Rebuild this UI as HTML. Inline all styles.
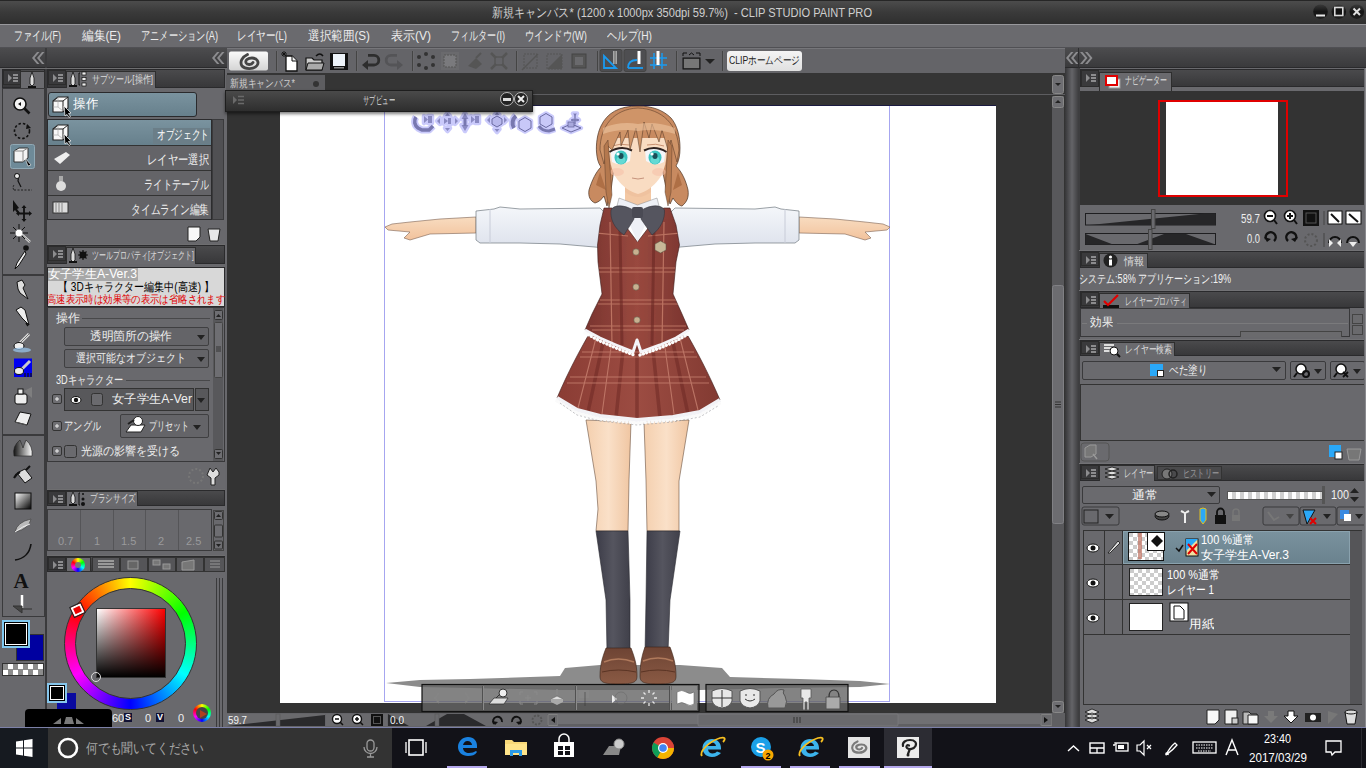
<!DOCTYPE html>
<html><head><meta charset="utf-8">
<style>
*{margin:0;padding:0;box-sizing:border-box}
html,body{width:1366px;height:768px;overflow:hidden;background:#68686c;font-family:"Liberation Sans",sans-serif;}
.a{position:absolute}
.t{position:absolute;white-space:nowrap;line-height:1;transform-origin:0 0}
.m{font-size:13px;color:#ececec;top:29px}
.hd{position:absolute;height:19px;background:linear-gradient(#4a4a4c,#38383a);border:1px solid #2a2a2c}
.mi{position:absolute;width:18px;height:15px;background:#3a3a3c;border:1px solid #2c2c2c}
.mi::before{content:'';position:absolute;left:4px;top:3px;border-left:4px solid #8c8c8e;border-top:4px solid transparent;border-bottom:4px solid transparent}
.mi::after{content:'';position:absolute;left:9px;top:3px;width:5px;height:8px;background:repeating-linear-gradient(#8c8c8e 0 2px,transparent 2px 3px)}
.tab{position:absolute;height:17px;background:#6a6a6e;border:1px solid #2e2e2e;border-bottom:none}
.tt{font-size:11px;color:#dcdcdc}
svg{position:absolute;overflow:visible}
</style></head><body>
<!-- ============ TITLE BAR ============ -->
<div class="a" style="left:0;top:0;width:1366px;height:24px;background:linear-gradient(#262626 0,#262626 1px,#4c4c4c 1px,#3a3a3a 50%,#2f2f2f)"></div>
<div class="t" style="left:492px;top:6px;font-size:13px;color:#cfcfcf;--w:380px">新規キャンバス* (1200 x 1000px 350dpi 59.7%)&nbsp; - CLIP STUDIO PAINT PRO</div>
<!-- window buttons -->
<svg style="left:1310px;top:2px" width="56" height="20" viewBox="1310 2 56 20">
 <defs><linearGradient id="wb" x1="0" x2="0" y1="0" y2="1"><stop offset="0" stop-color="#3a3a3a"/><stop offset=".5" stop-color="#151515"/><stop offset="1" stop-color="#1e1e1e"/></linearGradient></defs>
 <circle cx="1320.5" cy="11.7" r="7.3" fill="url(#wb)"/><rect x="1316" y="14.5" width="9" height="2" fill="#e8e8e8"/>
 <circle cx="1338.8" cy="11.7" r="7.3" fill="url(#wb)"/><rect x="1334.8" y="7.5" width="8" height="8" fill="#111" stroke="#d8d8d8" stroke-width="1.6"/>
 <circle cx="1356.8" cy="11.7" r="7.3" fill="url(#wb)"/><path d="M1353.5 8.5l6.5 6.5M1360 8.5l-6.5 6.5" stroke="#e0e0e0" stroke-width="2"/>
</svg>

<!-- ============ MENU BAR ============ -->
<div class="a" style="left:0;top:24px;width:1366px;height:24px;background:#6a6a6e;border-top:1px solid #98989c;border-bottom:1px solid #505054"></div>
<div class="t m" style="left:14px;--w:47px">ファイル(F)</div>
<div class="t m" style="left:82px;--w:39px">編集(E)</div>
<div class="t m" style="left:141px;--w:77px">アニメーション(A)</div>
<div class="t m" style="left:237px;--w:50px">レイヤー(L)</div>
<div class="t m" style="left:308px;--w:62px">選択範囲(S)</div>
<div class="t m" style="left:391px;--w:40px">表示(V)</div>
<div class="t m" style="left:451px;--w:54px">フィルター(I)</div>
<div class="t m" style="left:525px;--w:62px">ウインドウ(W)</div>
<div class="t m" style="left:607px;--w:45px">ヘルプ(H)</div>

<!-- ============ LEFT SIDE ============ -->
<div class="a" style="left:0;top:48px;width:227px;height:20px;background:linear-gradient(#4c4c4e,#3a3a3c);border-bottom:1px solid #2a2a2c"></div>
<div class="a" style="left:45px;top:48px;width:2px;height:680px;background:#3a3a3c"></div>
<div class="a" style="left:0;top:68px;width:227px;height:1px;background:#6e6e70"></div>

<!-- left tool column -->
<div class="hd" style="left:2px;top:69px;width:43px;height:19px"></div>
<div class="mi" style="left:3px;top:70px"></div>
<div class="tab" style="left:20px;top:71px;width:25px"></div>
<div class="a" style="left:2px;top:88px;width:43px;height:529px;border:1px solid #3a3a3c;background:#69696d"></div>
<div class="a" style="left:2px;top:274px;width:43px;height:2px;background:#3c3c3e"></div>
<div class="a" style="left:2px;top:434px;width:43px;height:2px;background:#3c3c3e"></div>
<svg style="left:0;top:68px" width="46" height="560" viewBox="0 68 46 560">
 <defs>
  <linearGradient id="gsq" x1="0" y1="0" x2="1" y2="1"><stop offset="0" stop-color="#fff"/><stop offset="1" stop-color="#000"/></linearGradient>
  <linearGradient id="gdrop" x1="0" x2="1"><stop offset="0" stop-color="#111"/><stop offset="1" stop-color="#fff"/></linearGradient>
 </defs>
 <!-- header pen icon -->
 <path d="M32 72l2 6v6l-2 2-2-2v-6z" fill="#ddd" stroke="#111" stroke-width=".8"/><rect x="28" y="86" width="8" height="2" fill="#111"/>
 <!-- magnifier -->
 <circle cx="20" cy="104" r="6" fill="#f4f4f4" stroke="#111" stroke-width="1.6"/><path d="M24.5 108.5l5 5" stroke="#111" stroke-width="2.6"/><path d="M18 104l3-2v4z" fill="#111"/>
 <!-- rotate -->
 <circle cx="22" cy="131" r="7.5" fill="none" stroke="#111" stroke-width="1.6" stroke-dasharray="2.5 2"/><path d="M27 124l4 4-5 1z" fill="#111"/>
 <!-- selected 3D -->
 <rect x="10.5" y="144.5" width="24" height="24" rx="2" fill="#6e8a98" stroke="#90a8b4"/>
 <path d="M14 151l5-3h9v10l-5 4h-9z" fill="#f4f4f4" stroke="#333" stroke-width="1"/><path d="M14 151h9v11M23 151l5-3" fill="none" stroke="#888"/><path d="M25 158l6 7-3 1z" fill="#000" stroke="#fff" stroke-width=".6"/>
 <!-- lasso/hand -->
 <path d="M15 174l4 1-1 6 3 6" fill="none" stroke="#111" stroke-width="1.2"/><circle cx="17" cy="176" r="2.5" fill="#eee" stroke="#111"/><path d="M14 190h18" stroke="#222" stroke-dasharray="2 1.5"/><path d="M14 185a4 4 0 0 0 0 5" stroke="#222" fill="none" stroke-dasharray="2 1"/>
 <!-- move -->
 <path d="M13 200l6 8-2 1 3 4-2 1-3-4-2 2z" fill="#111"/><path d="M24 208v11M19 213.5h11" stroke="#111" stroke-width="1.8"/><path d="M24 205l-2.5 3h5zM24 222l-2.5-3h5zM16 213.5l3-2.5v5zM32 213.5l-3-2.5v5z" fill="#111"/>
 <!-- magic wand -->
 <path d="M20 233l10 9" stroke="#ddd" stroke-width="2.4"/><path d="M20 233l10 9" stroke="#333" stroke-width=".6"/>
 <path d="M19 224v18M10 233h18M13 227l12 12M25 227l-12 12" stroke="#111" stroke-width="1"/><circle cx="19" cy="233" r="3.5" fill="#fff"/>
 <!-- eyedropper -->
 <circle cx="26" cy="248" r="2.8" fill="#111"/><path d="M25 251l-8 12-2 6 4-4 7-11z" fill="#eee" stroke="#111" stroke-width="1"/>
 <!-- separator -->
 <path d="M2 275h43" stroke="#3a3a3c" stroke-width="2"/>
 <!-- pen -->
 <path d="M17 282l5-2 3 5-2 3 5 11-8-6-2-4z" fill="#ddd" stroke="#111" stroke-width="1"/>
 <!-- pencil -->
 <path d="M16 310l5-3 4 3 4 15-7-7z" fill="#eee" stroke="#111" stroke-width="1"/><path d="M26 323l2 3" stroke="#111" stroke-width="1.5"/>
 <!-- brush -->
 <path d="M29 334l-9 9" stroke="#ddd" stroke-width="3"/><path d="M29 334l-9 9" stroke="#555" stroke-width=".8"/><ellipse cx="19" cy="346" rx="5" ry="3.5" fill="#eee" stroke="#111"/><ellipse cx="22" cy="350" rx="9" ry="2.5" fill="#9ac8f0" opacity=".7"/>
 <!-- blue airbrush -->
 <rect x="14" y="358.5" width="18" height="18.5" fill="#0000f0"/><path d="M30 361l-9 9" stroke="#ccc" stroke-width="3"/><ellipse cx="19" cy="371" rx="4.5" ry="3.5" fill="#eee" stroke="#111"/><path d="M25 373v4M28 373v4M31 373v4" stroke="#111" stroke-width="1.2"/>
 <!-- spray -->
 <rect x="15" y="394" width="12" height="10" rx="2" fill="#eee" stroke="#111"/><rect x="18" y="389" width="5" height="5" fill="#eee" stroke="#111"/><path d="M24 391l8-4v11z" fill="#888" opacity=".7"/>
 <!-- eraser -->
 <path d="M15 422l5-10 11 2-4 11z" fill="#eee" stroke="#111"/><path d="M15 422l12 3" stroke="#555"/>
 <path d="M2 435h43" stroke="#3a3a3c" stroke-width="2"/>
 <!-- drops -->
 <path d="M14 456q-2-10 6-16 2 5 3 8 1-3 3-8 7 6 6 16z" fill="url(#gdrop)" stroke="#222" stroke-width=".6"/>
 <!-- bucket -->
 <path d="M17 473l8-4 7 9-7 5z" fill="#ddd" stroke="#111"/><path d="M14 478q2-4 6-6" stroke="#111" stroke-width="2" fill="none"/><path d="M26 470l4-4" stroke="#111" stroke-width="2"/>
 <!-- gradient square -->
 <rect x="15" y="493" width="16" height="16" fill="url(#gsq)" stroke="#111"/>
 <!-- figure -->
 <path d="M15 532q2-10 16-13q-2 10-16 13z" fill="#bbb" stroke="#444" stroke-width=".7"/><path d="M15 532q8-6 15-8" stroke="#eee" fill="none"/>
 <!-- curve -->
 <path d="M15 560q14-2 16-16" fill="none" stroke="#111" stroke-width="1.6"/>
 <!-- A -->
 <text x="13.5" y="588" font-family="Liberation Serif" font-size="21" font-weight="bold" fill="#111">A</text>
 <!-- ruler -->
 <path d="M22 595v13" stroke="#fff" stroke-width="2.5"/><path d="M13 606l9 7v-7zM22 609h10" fill="#444" stroke="#333"/>
</svg>


<!-- subtool panel -->
<div class="hd" style="left:47px;top:69px;width:178px"></div>
<div class="mi" style="left:48px;top:70px"></div>
<div class="tab" style="left:66px;top:71px;width:90px"></div>
<svg style="left:68px;top:70px" width="24" height="18"><path d="M5 2l2 6v6l-2 2-2-2V8z" fill="#ddd" stroke="#111" stroke-width=".8"/><rect x="1" y="15" width="8" height="2" fill="#111"/><path d="M12 3h-1v12h1" fill="none" stroke="#111"/><rect x="14" y="2" width="4" height="3" fill="#eee" stroke="#111" stroke-width=".7"/><rect x="14" y="7.5" width="4" height="3" fill="#eee" stroke="#111" stroke-width=".7"/><rect x="14" y="13" width="4" height="3" fill="#eee" stroke="#111" stroke-width=".7"/></svg>
<div class="t tt" style="left:92px;top:74px;--w:61px">サブツール[操作]</div>
<div class="a" style="left:48px;top:92px;width:149px;height:25px;border-radius:3px;border:1px solid #2a2a2c;background:linear-gradient(#7a939f,#67808c)"></div>
<div class="t" style="left:73px;top:97px;font-size:13px;color:#fff;--w:25px">操作</div>
<div class="a" style="left:47px;top:119px;width:165px;height:101px;background:#646468;border:1px solid #2c2c2e"></div>
<div class="a" style="left:48px;top:120px;width:163px;height:25px;background:linear-gradient(#7a939f,#67808c)"></div>
<div class="a" style="left:48px;top:145px;width:163px;height:1px;background:#333"></div>
<div class="a" style="left:48px;top:170px;width:163px;height:1px;background:#333"></div>
<div class="a" style="left:48px;top:195px;width:163px;height:1px;background:#333"></div>
<div class="a" style="left:153px;top:128px;width:57px;height:16px;background:#6b7e88"></div>
<div class="t" style="left:157px;top:128px;font-size:13px;color:#fff;--w:52px">オブジェクト</div>
<div class="t" style="left:147px;top:153px;font-size:13px;color:#eee;--w:62px">レイヤー選択</div>
<div class="t" style="left:144px;top:178px;font-size:13px;color:#eee;--w:65px">ライトテーブル</div>
<div class="t" style="left:131px;top:203px;font-size:13px;color:#eee;--w:78px">タイムライン編集</div>
<div class="a" style="left:212px;top:119px;width:12px;height:101px;background:#505053;border:1px solid #3a3a3c"></div>
<svg style="left:50px;top:94px" width="30" height="22"><path d="M3 7l5-4h10v11l-5 4H3z" fill="#f8f8f8" stroke="#222" stroke-width="1.1"/><path d="M3 7h10v11M13 7l5-4" fill="none" stroke="#222" stroke-width="1"/><path d="M8 3v10H3M8 13l5 4" fill="none" stroke="#aaa" stroke-width=".7"/><path d="M14 12l7 7-2.5.5 2 3-1.5 1-2-3-2 1.5z" fill="#000" stroke="#fff" stroke-width=".7"/></svg>
<svg style="left:50px;top:122px" width="30" height="22"><path d="M3 7l5-4h10v11l-5 4H3z" fill="#f8f8f8" stroke="#222" stroke-width="1.1"/><path d="M3 7h10v11M13 7l5-4" fill="none" stroke="#222" stroke-width="1"/><path d="M8 3v10H3M8 13l5 4" fill="none" stroke="#aaa" stroke-width=".7"/><path d="M14 12l7 7-2.5.5 2 3-1.5 1-2-3-2 1.5z" fill="#000" stroke="#fff" stroke-width=".7"/></svg>
<svg style="left:52px;top:149px" width="22" height="18"><path d="M2 10l6 5 10-9-4-3z" fill="#eee"/></svg>
<svg style="left:54px;top:174px" width="14" height="18"><ellipse cx="7" cy="12" rx="5" ry="5" fill="#ddd"/><rect x="5" y="2" width="4" height="5" fill="#aaa"/></svg>
<svg style="left:52px;top:201px" width="18" height="14"><rect x="1" y="1" width="15" height="11" fill="#ddd" stroke="#333"/><path d="M4 1v11M7 1v11M10 1v11" stroke="#888"/></svg>
<svg style="left:186px;top:225px" width="38" height="18"><path d="M2 2h12v10l-4 4H2z" fill="#f8f8f8" stroke="#222"/><path d="M22 4h12l-2 12h-8z" fill="#e8e8e8" stroke="#222"/></svg>

<!-- tool property -->
<div class="a" style="left:47px;top:244px;width:178px;height:1px;background:#6e6e70"></div>
<div class="hd" style="left:47px;top:245px;width:178px"></div>
<div class="mi" style="left:48px;top:246px"></div>
<div class="tab" style="left:66px;top:247px;width:130px"></div>
<svg style="left:68px;top:246px" width="24" height="18"><path d="M5 2l2 6v6l-2 2-2-2V8z" fill="#ddd" stroke="#111" stroke-width=".8"/><rect x="1" y="15" width="8" height="2" fill="#111"/><circle cx="15" cy="9" r="3.5" fill="#111"/><path d="M15 4v10M10 9h10M11.5 5.5l7 7M18.5 5.5l-7 7" stroke="#111" stroke-width="1.2"/></svg>
<div class="t tt" style="left:92px;top:250px;--w:102px">ツールプロパティ[オブジェクト]</div>
<div class="a" style="left:47px;top:267px;width:178px;height:40px;background:#d8d8d8;border:1px solid #2a2a2c"></div>
<div class="a" style="left:48px;top:268px;width:90px;height:13px;background:#a8a8a8"></div>
<div class="t" style="left:48px;top:268px;font-size:12px;color:#fff;--w:89px">女子学生A-Ver.3</div>
<div class="t" style="left:58px;top:281px;font-size:12px;color:#000;--w:156px">【 3Dキャラクター編集中(高速) 】</div>
<div class="t" style="left:47px;top:294px;font-size:11px;color:#e00000;--w:178px">高速表示時は効果等の表示は省略されます</div>
<div class="a" style="left:47px;top:307px;width:178px;height:155px;background:#69696d;border:1px solid #38383a"></div>
<div class="t" style="left:56px;top:312px;font-size:12px;color:#eee;--w:24px">操作</div>
<div class="a" style="left:82px;top:318px;width:128px;height:1px;background:#48484a"></div>
<div class="a" style="left:64px;top:327px;width:145px;height:19px;background:#646468;border:1px solid #3f3f41;border-radius:2px"></div>
<div class="t" style="left:90px;top:330px;font-size:12px;color:#eee;--w:82px">透明箇所の操作</div>
<div class="a" style="left:64px;top:349px;width:145px;height:19px;background:#646468;border:1px solid #3f3f41;border-radius:2px"></div>
<div class="t" style="left:76px;top:352px;font-size:12px;color:#eee;--w:110px">選択可能なオブジェクト</div>
<div class="t" style="left:56px;top:374px;font-size:12px;color:#eee;--w:67px">3Dキャラクター</div>
<div class="a" style="left:126px;top:380px;width:84px;height:1px;background:#48484a"></div>
<div class="a" style="left:64px;top:388px;width:130px;height:23px;background:#58585b;border:1px solid #333"></div>
<div class="a" style="left:195px;top:388px;width:14px;height:23px;background:#58585b;border:1px solid #333"></div>
<div class="t" style="left:112px;top:393px;font-size:12px;color:#eee;--w:80px">女子学生A-Ver</div>
<div class="t" style="left:64px;top:420px;font-size:12px;color:#eee;--w:37px">アングル</div>
<div class="a" style="left:120px;top:414px;width:89px;height:24px;background:#646468;border:1px solid #3f3f41;border-radius:2px"></div>
<div class="t" style="left:149px;top:420px;font-size:12px;color:#eee;--w:40px">プリセット</div>
<div class="t" style="left:81px;top:445px;font-size:12px;color:#eee;--w:99px">光源の影響を受ける</div>
<div class="a" style="left:213px;top:308px;width:10px;height:153px;background:#535356"></div>
<div class="a" style="left:47px;top:462px;width:178px;height:26px;background:#69696d"></div>
<svg style="left:47px;top:307px" width="178" height="155" viewBox="47 307 178 155">
 <g fill="#6e6e72" stroke="#333"><rect x="52.5" y="394.5" width="9" height="9" rx="1.5"/><rect x="52.5" y="421.5" width="9" height="9" rx="1.5"/><rect x="52.5" y="446.5" width="9" height="9" rx="1.5"/></g>
 <path d="M55 399h4M57 397v4M55 426h4M57 424v4M55 451h4M57 449v4" stroke="#eee"/>
 <path d="M197 335h8l-4 5zM197 357h8l-4 5zM197 398h8l-4 5zM193 425h8l-4 5z" fill="#222"/>
 <ellipse cx="76" cy="400" rx="5" ry="3.5" fill="#fff" stroke="#111"/><circle cx="76" cy="400" r="2.2" fill="#111"/>
 <rect x="91.5" y="393.5" width="11" height="12" rx="2" fill="#6a6a6e" stroke="#333"/>
 <rect x="64.5" y="445.5" width="12" height="12" rx="2" fill="#6a6a6e" stroke="#333"/>
 <path d="M126 432l5-7h14l-4 7z" fill="#fff" stroke="#222"/><circle cx="138" cy="421" r="4.5" fill="#fff" stroke="#222"/><path d="M128 424l6-4" stroke="#222" stroke-width="2"/>
 <g transform="translate(0,0)"><rect x="213" y="308" width="10" height="153" fill="#58585b"/>
 <rect x="214.5" y="310.5" width="8" height="9" rx="1" fill="#6e6e72" stroke="#333"/><path d="M216 317l2.5-3 2.5 3z" fill="#222"/>
 <rect x="214.5" y="322.5" width="8" height="55" rx="1" fill="#6e6e72" stroke="#444"/><path d="M216 347h5M216 349h5M216 351h5" stroke="#333"/>
 <rect x="214.5" y="449.5" width="8" height="9" rx="1" fill="#6e6e72" stroke="#333"/><path d="M216 452l2.5 3 2.5-3z" fill="#222"/></g>
</svg>
<svg style="left:186px;top:465px" width="38" height="22"><circle cx="10" cy="11" r="7" fill="none" stroke="#777" stroke-width="2" stroke-dasharray="2 2"/><path d="M24 3l3 4 3-4 3 4v3l-4 3v7h-4v-7l-4-3z" fill="#ddd" stroke="#222"/></svg>

<!-- brush size -->
<div class="a" style="left:47px;top:489px;width:178px;height:1px;background:#6e6e70"></div>
<div class="hd" style="left:47px;top:490px;width:178px;height:16px"></div>
<div class="mi" style="left:48px;top:491px;height:13px"></div>
<div class="tab" style="left:66px;top:491px;width:72px;height:15px"></div>
<svg style="left:68px;top:491px" width="24" height="16"><path d="M5 1l2 5v5l-2 2-2-2V6z" fill="#ddd" stroke="#111" stroke-width=".8"/><rect x="1" y="13" width="8" height="2" fill="#111"/><path d="M12 2h-1v12h1" fill="none" stroke="#111"/><circle cx="15" cy="3" r="1" fill="#111"/><circle cx="15" cy="8" r="1.5" fill="#111"/><circle cx="15" cy="13" r="2" fill="#111"/></svg>
<div class="t tt" style="left:90px;top:493px;--w:46px">ブラシサイズ</div>
<div class="a" style="left:47px;top:509px;width:165px;height:42px;background:#69696d;border:1px solid #3a3a3c"></div>
<div class="t" style="left:58px;top:536px;font-size:11px;color:#9a9a9c">0.7</div>
<div class="t" style="left:94px;top:536px;font-size:11px;color:#9a9a9c">1</div>
<div class="t" style="left:121px;top:536px;font-size:11px;color:#9a9a9c">1.5</div>
<div class="t" style="left:158px;top:536px;font-size:11px;color:#9a9a9c">2</div>
<div class="t" style="left:186px;top:536px;font-size:11px;color:#9a9a9c">2.5</div>

<!-- color -->
<div class="a" style="left:47px;top:555px;width:178px;height:1px;background:#6e6e70"></div>
<div class="hd" style="left:47px;top:556px;width:178px;height:16px"></div>
<div class="mi" style="left:48px;top:557px;height:13px"></div>
<div class="tab" style="left:66px;top:557px;width:25px;height:15px"></div>
<div class="a" style="left:47px;top:572px;width:178px;height:156px;background:#69696d"></div>
<div class="a" style="left:64px;top:577px;width:133px;height:133px;border-radius:50%;background:conic-gradient(#ff0 0deg,#0f0 60deg,#0ff 120deg,#00f 180deg,#f0f 240deg,#f00 300deg,#ff0 360deg);border:1px solid #333"></div>
<div class="a" style="left:75px;top:588px;width:111px;height:111px;border-radius:50%;background:#69696d;border:1px solid #333"></div>
<div class="a" style="left:96px;top:608px;width:70px;height:70px;background:linear-gradient(transparent,#000),linear-gradient(90deg,#fff,#f00);border:1px solid #333"></div>
<div class="a" style="left:72px;top:605px;width:11px;height:10px;background:#e00;border:2px solid #fff;outline:1px solid #222;transform:rotate(-25deg)"></div>
<div class="a" style="left:91px;top:672px;width:10px;height:10px;border-radius:50%;border:1.5px solid #ddd"></div>

<!-- fg/bg swatches -->
<div class="a" style="left:16px;top:634px;width:28px;height:27px;background:#0000a0;border:1px solid #333"></div>
<div class="a" style="left:2px;top:620px;width:28px;height:28px;background:#000;border:2px solid #80c8f0;box-shadow:inset 0 0 0 1px #000,inset 0 0 0 2px #fff"></div>
<div class="a" style="left:2px;top:663px;width:42px;height:13px;border:1px solid #333;background:repeating-conic-gradient(#fff 0 25%,#8c8c8c 0 50%) 0 0/10px 11px"></div>
<div class="a" style="left:57px;top:693px;width:19px;height:16px;background:#0a0aa0"></div>
<div class="a" style="left:47px;top:683px;width:20px;height:20px;background:#000;border:2px solid #86c6ec;box-shadow:inset 0 0 0 1px #000,inset 0 0 0 2px #fff"></div>
<div class="a" style="left:25px;top:709px;width:87px;height:19px;background:#000;border-radius:4px 4px 0 0"></div>
<svg style="left:50px;top:712px" width="40" height="14"><path d="M3 12l8-6v6zM14 12l2-7h6l2 7zM26 6l8 6h-8z" fill="#7a7a7a"/></svg>
<div class="t" style="left:112px;top:713px;font-size:11px;color:#f0f0f0">60</div>
<div class="a" style="left:124px;top:713px;width:8px;height:9px;background:#111133"></div><div class="t" style="left:125px;top:713px;font-size:9px;color:#fff;font-weight:bold">S</div>
<div class="t" style="left:145px;top:713px;font-size:11px;color:#f0f0f0">0</div>
<div class="a" style="left:156px;top:713px;width:8px;height:9px;background:#111133"></div><div class="t" style="left:157px;top:713px;font-size:9px;color:#fff;font-weight:bold">V</div>
<div class="t" style="left:178px;top:713px;font-size:11px;color:#f0f0f0">0</div>
<div class="a" style="left:193px;top:704px;width:18px;height:18px;border-radius:50%;background:conic-gradient(#ff0,#0f0,#0ff,#00f,#f0f,#f00,#ff0)"></div>
<div class="a" style="left:196px;top:707px;width:12px;height:12px;border-radius:50%;background:#444"></div>
<svg style="left:197px;top:708px" width="12" height="12"><path d="M3 2l7 4-7 4z" fill="#b04020"/></svg>
<div class="a" style="left:216px;top:578px;width:9px;height:150px;background:repeating-linear-gradient(90deg,#3a3a3c 0 1px,#69696d 1px 3px)"></div>
<!-- brush size dividers -->
<div class="a" style="left:80px;top:510px;width:1px;height:40px;background:#555558"></div>
<div class="a" style="left:113px;top:510px;width:1px;height:40px;background:#555558"></div>
<div class="a" style="left:145px;top:510px;width:1px;height:40px;background:#555558"></div>
<div class="a" style="left:178px;top:510px;width:1px;height:40px;background:#555558"></div>
<div class="a" style="left:213px;top:510px;width:11px;height:41px;background:#69696d;border:1px solid #444"></div>
<svg style="left:213px;top:510px" width="12" height="42"><rect x="1.5" y="1.5" width="8" height="8" rx="1" fill="#6e6e72" stroke="#333"/><path d="M3 7l2.5-3 2.5 3z" fill="#222"/><rect x="1.5" y="15" width="8" height="12" rx="1" fill="#6e6e72" stroke="#333"/><rect x="1.5" y="31" width="8" height="8" rx="1" fill="#6e6e72" stroke="#333"/><path d="M3 34l2.5 3 2.5-3z" fill="#222"/></svg>
<!-- color tabs -->
<div class="a" style="left:66px;top:557px;width:25px;height:15px;background:#6a6a6e;border:1px solid #2e2e2e"></div>
<div class="a" style="left:71px;top:558px;width:14px;height:14px;border-radius:50%;background:conic-gradient(#ff0,#0f0,#0ff,#00f,#f0f,#f00,#ff0)"></div>
<div class="a" style="left:75px;top:562px;width:6px;height:6px;border-radius:50%;background:#777"></div>
<svg style="left:92px;top:557px" width="133" height="15">
 <rect x="0.5" y="0.5" width="27" height="14" fill="#555558" stroke="#333"/><path d="M6 4h16M6 7h16M6 10h16" stroke="#999" stroke-width="2"/>
 <rect x="28.5" y="0.5" width="27" height="14" fill="#555558" stroke="#333"/><rect x="36" y="4" width="10" height="8" fill="#666" stroke="#999"/>
 <rect x="56.5" y="0.5" width="27" height="14" fill="#555558" stroke="#333"/><rect x="61" y="3" width="7" height="5" fill="#777" stroke="#999"/><rect x="71" y="7" width="7" height="5" fill="#777" stroke="#999"/>
 <rect x="84.5" y="0.5" width="27" height="14" fill="#555558" stroke="#333"/><path d="M90 5l12-2v10h-12z" fill="#777" stroke="#999"/>
 <rect x="112.5" y="0.5" width="20" height="14" fill="#555558" stroke="#333"/><path d="M118 4h10M118 7h10M118 10h10" stroke="#999"/>
</svg>

<!-- ============ TOOLBAR ============ -->
<div class="a" style="left:227px;top:48px;width:838px;height:25px;background:#646468;border-top:1px solid #76767a"></div>
<svg style="left:227px;top:48px" width="838" height="25" viewBox="227 48 838 25">
 <defs><linearGradient id="cbtn" x1="0" x2="0" y1="0" y2="1"><stop offset="0" stop-color="#fafafa"/><stop offset="1" stop-color="#d4d4d4"/></linearGradient></defs>
 <rect x="229" y="51.5" width="39" height="19" rx="2" fill="url(#cbtn)"/>
 <path d="M247.5 54.5C242 57 239.5 62 242 66C245 69.5 254 69.5 257 65.5C259.5 62 257 58 252 58C248 58 245 60 246 62.8C247 65.2 251.5 65 253 62.5" fill="none" stroke="#454545" stroke-width="2.8" stroke-linecap="round"/>
 <g stroke="#444" stroke-width="1"><path d="M276.5 51v20M356.5 51v20M412.5 51v20M516.5 51v20M597.5 51v20M676.5 51v20M722.5 51v20"/></g>
 <g stroke="#6a6a6d" stroke-width="1"><path d="M277.5 51v20M357.5 51v20M413.5 51v20M517.5 51v20M598.5 51v20M677.5 51v20M723.5 51v20"/></g>
 <!-- new -->
 <path d="M286 56h6l5 5v10h-11z" fill="#fff" stroke="#111" stroke-width="1.3"/><path d="M292 56v5h5" fill="#eee" stroke="#111" stroke-width="1"/><path d="M282 52l4 4M286 52l-4 4M284 51v6M281 54h6" stroke="#111" stroke-width=".9"/>
 <!-- open -->
 <path d="M306 58h6l2 2h8v10h-16z" fill="#ccc" stroke="#111" stroke-width="1.2"/><path d="M308 63h16l-2 7h-16z" fill="#aaa" stroke="#111"/><path d="M316 56q4-4 7 0" fill="none" stroke="#111" stroke-width="1.5"/>
 <!-- save -->
 <rect x="330" y="53" width="18" height="17" fill="#111"/><rect x="333" y="54" width="12" height="12" fill="#eef4fa"/><rect x="334" y="67" width="10" height="1.5" fill="#888"/>
 <!-- undo/redo -->
 <path d="M367 65h7a4.8 4.8 0 0 0 0-9.6h-6" fill="none" stroke="#2e2e2e" stroke-width="2.8"/><path d="M362 65l6-5v10z" fill="#2e2e2e"/>
 <path d="M398 65h-7a4.8 4.8 0 0 1 0-9.6h6" fill="none" stroke="#545457" stroke-width="2.8"/><path d="M403 65l-6-5v10z" fill="#545457"/>
 <!-- dots -->
 <g fill="#333"><circle cx="426" cy="54" r="2"/><circle cx="433" cy="57" r="2"/><circle cx="433" cy="65" r="2"/><circle cx="426" cy="68" r="2"/><circle cx="419" cy="65" r="2"/><circle cx="419" cy="57" r="2"/></g>
 <rect x="441" y="52" width="18" height="18" fill="#6a6a6d"/><rect x="444" y="55" width="12" height="12" fill="#7a7a7d" stroke="#555" stroke-dasharray="2 1"/>
 <path d="M468 66l8-8 6 6-6 5z" fill="#555"/><path d="M476 58l5-5" stroke="#555" stroke-width="2"/>
 <path d="M491 53l5 5M507 53l-5 5M491 69l5-5M507 69l-5-5" stroke="#555" stroke-width="2.5"/><rect x="495" y="57" width="8" height="8" fill="none" stroke="#555" stroke-width="1.5"/>
 <!-- dim icons -->
 <rect x="524" y="54" width="13" height="14" fill="none" stroke="#555" stroke-dasharray="2 1"/><path d="M522 70l16-16" stroke="#555" stroke-width="1.5"/>
 <rect x="547" y="54" width="15" height="15" fill="none" stroke="#555" stroke-dasharray="2 1"/><path d="M547 69l15-15v15z" fill="#555"/>
 <rect x="572" y="54" width="14" height="14" fill="#555" stroke="#444"/><rect x="575" y="57" width="8" height="8" fill="#6a6a6d"/>
 <!-- ruler buttons -->
 <rect x="600" y="49.5" width="22" height="22" rx="2" fill="#4e4e51" stroke="#444"/>
 <rect x="624" y="49.5" width="22" height="22" rx="2" fill="#4e4e51" stroke="#444"/>
 <path d="M604 56l12 12h-12z" fill="none" stroke="#1a9af0" stroke-width="1.8"/><path d="M615 51v13" stroke="#fff" stroke-width="3"/><path d="M615 51v13" stroke="#111" stroke-width="1"/>
 <path d="M628 68q0-8 9-8" fill="none" stroke="#1a9af0" stroke-width="1.8"/><path d="M628 68h15" stroke="#1a9af0" stroke-width="1.8"/><path d="M639 51v13" stroke="#fff" stroke-width="3"/>
 <path d="M650 58h17M650 65h17M654 53v16M662 53v16" stroke="#1a9af0" stroke-width="1.5"/><path d="M658 51v14" stroke="#fff" stroke-width="3"/>
 <!-- window icon -->
 <rect x="683" y="58" width="17" height="11" fill="#444" stroke="#111"/><rect x="684" y="59" width="15" height="9" fill="#777"/><path d="M683 56v-3h4M700 56v-3h-4M689 55l2.5-2 2.5 2" stroke="#111" fill="none"/>
 <path d="M705 59h10l-5 5z" fill="#222"/>
</svg>
<div class="a" style="left:727px;top:51px;width:75px;height:20px;background:linear-gradient(#f4f4f4,#e0e0e0);border-radius:3px"></div>
<div class="t" style="left:729px;top:55px;font-size:11px;color:#222;--w:71px">CLIPホームページ</div>


<!-- canvas tab row -->
<div class="a" style="left:227px;top:73px;width:838px;height:22px;background:#353535"></div>
<div class="a" style="left:226px;top:75px;width:99px;height:17px;background:#5d5d60"></div>
<div class="t" style="left:230px;top:78px;font-size:11px;color:#d0d0d0;--w:65px">新規キャンバス*</div>
<div class="a" style="left:313px;top:81px;width:6px;height:6px;border-radius:50%;background:#333"></div>
<div class="a" style="left:227px;top:94px;width:838px;height:1px;background:#5d5d60"></div>
<!-- canvas area -->
<div class="a" style="left:227px;top:95px;width:838px;height:618px;background:#333"></div>
<div class="a" style="left:280px;top:106px;width:716px;height:597px;background:#fff"></div>
<div class="a" style="left:280px;top:105px;width:716px;height:1px;background:#1a1a40"></div>
<div class="a" style="left:384px;top:106px;width:506px;height:596px;border:1px solid #a6a6f0;border-top:none"></div>
<!-- v scrollbar -->
<div class="a" style="left:1052px;top:96px;width:12px;height:617px;background:#58585b"></div>
<svg style="left:1052px;top:74px" width="12" height="640" viewBox="1052 74 12 640">
 <rect x="1052.5" y="75.5" width="11" height="18" rx="2" fill="#6e6e72" stroke="#888"/><path d="M1055 83h6l-3 3z" fill="#222"/>
 <rect x="1052.5" y="96.5" width="11" height="11" rx="2" fill="#6e6e72" stroke="#888"/><path d="M1055 103h6l-3-3z" fill="#222"/>
 <rect x="1052.5" y="285.5" width="11" height="238" rx="2" fill="#6c6c70" stroke="#808084"/><path d="M1055 402h6M1055 404.5h6M1055 407h6" stroke="#333"/>
 <rect x="1052.5" y="701.5" width="11" height="11" rx="2" fill="#6e6e72" stroke="#888"/><path d="M1055 705h6l-3 3z" fill="#222"/>
</svg>

<!-- CHARACTER -->
<svg style="left:0;top:0" width="1366" height="768" viewBox="0 0 1366 768">
 <defs>
  <linearGradient id="sleeve" x1="0" x2="0" y1="0" y2="1"><stop offset="0" stop-color="#f4f6fa"/><stop offset="1" stop-color="#dde2ec"/></linearGradient>
  <linearGradient id="skin" x1="0" x2="0" y1="0" y2="1"><stop offset="0" stop-color="#f8dcc0"/><stop offset="1" stop-color="#f2c29c"/></linearGradient>
  <linearGradient id="leg" x1="0" x2="1"><stop offset="0" stop-color="#f4cfae"/><stop offset=".5" stop-color="#fae0c8"/><stop offset="1" stop-color="#f0c6a2"/></linearGradient>
  <linearGradient id="sock" x1="0" x2="1"><stop offset="0" stop-color="#3c3c48"/><stop offset=".5" stop-color="#55555f"/><stop offset="1" stop-color="#40404a"/></linearGradient>
  <linearGradient id="hair" x1="0" x2="0" y1="0" y2="1"><stop offset="0" stop-color="#d79a6c"/><stop offset=".5" stop-color="#c98a5c"/><stop offset="1" stop-color="#a8704c"/></linearGradient>
  <linearGradient id="vest" x1="0" x2="1"><stop offset="0" stop-color="#7a3530"/><stop offset=".5" stop-color="#9a4a40"/><stop offset="1" stop-color="#7a3530"/></linearGradient>
  <linearGradient id="skirt" x1="0" x2="1"><stop offset="0" stop-color="#8a3c34"/><stop offset=".5" stop-color="#9c4c42"/><stop offset="1" stop-color="#823a32"/></linearGradient>
  <linearGradient id="shoe" x1="0" x2="0" y1="0" y2="1"><stop offset="0" stop-color="#6e4434"/><stop offset="1" stop-color="#8a5a44"/></linearGradient>
 </defs>
 <!-- shadow -->
 <path d="M386 683 L420 680 L470 679 L560 676 L565 668 L600 665 L680 665 L722 668 L730 677 L800 679 L860 681 L890 684 L860 687 L780 688 L700 690 L560 690 L470 688 L420 687 Z" fill="#8c8c8c"/>
 <!-- left arm -->
 <path d="M476 217 L440 219 L410 222 L392 224 L385 227 L388 230 L410 232 L404 238 L410 240 L430 234 L476 233 Z" fill="url(#skin)" stroke="#7a6050" stroke-width=".6"/>
 <path d="M476 211 L494 209 L500 207 L520 209 L600 208 L606 214 L606 248 L560 244 L520 243 L494 243 L480 243 L476 240 Z" fill="url(#sleeve)" stroke="#707880" stroke-width=".7"/>
 <path d="M490 209 L490 243" stroke="#c8ccd8" stroke-width="1"/>
 <!-- right arm -->
 <path d="M799 217 L835 219 L865 222 L883 224 L890 227 L887 230 L865 232 L871 238 L865 240 L845 234 L799 233 Z" fill="url(#skin)" stroke="#7a6050" stroke-width=".6"/>
 <path d="M799 211 L781 209 L775 207 L755 209 L675 208 L669 214 L669 248 L715 244 L755 243 L781 243 L795 243 L799 240 Z" fill="url(#sleeve)" stroke="#707880" stroke-width=".7"/>
 <path d="M785 209 L785 243" stroke="#c8ccd8" stroke-width="1"/>
 <!-- back hair -->
 <path d="M638 106 C619 106 607 113 601 126 C597 134 596 145 596.5 152 C597 158 598 163 601 167 C596 172 592 180 589 190 C588 196 590 201 595 203 C599 202 602 199 604 196 L607 206 L611 190 L614 168 L612 150 L664 150 L662 168 L666 188 L670 204 L673 198 C676 203 680 206 682 206 C687 202 689 197 688 190 C686 181 682 172 676 166 C679 161 680 155 680 148 C680 136 677 125 671 118 C663 110 652 106 638 106 Z" fill="#c88a60" stroke="#4a3020" stroke-width=".7"/>
 <path d="M596 185 L600 172 L606 190 Z M682 185 L678 172 L673 190 Z" fill="#a8683f" opacity=".8"/>
 <!-- neck -->
 <path d="M625 178 L651 178 L651 206 L625 206 Z" fill="#f3c8a4"/>
 <path d="M625 186 Q638 198 651 186 L651 192 Q638 202 625 192 Z" fill="#e8b898" opacity=".35"/>
 <!-- face -->
 <path d="M609 138 C608 160 612 172 617 179 C622 186 630 192 638 194 C646 192 654 186 659 179 C664 172 668 160 667 138 Z" fill="#f9dcc2"/>
 <ellipse cx="617" cy="172" rx="7" ry="4" fill="#f6c0a8" opacity=".55"/>
 <ellipse cx="659" cy="172" rx="7" ry="4" fill="#f6c0a8" opacity=".55"/>
 <!-- eyes -->
 <path d="M610.5 151 Q621 146 631 150 L630 161 Q621 167 612 162 Z" fill="#f4f6fa"/>
 <ellipse cx="621" cy="157.5" rx="6.5" ry="7" fill="#3cc4c0"/>
 <ellipse cx="621" cy="160" rx="4.5" ry="4" fill="#6ee0d8" opacity=".8"/>
 <ellipse cx="621" cy="156" rx="2.6" ry="3" fill="#1a4e58"/>
 <circle cx="618" cy="154" r="1.6" fill="#fff"/>
 <path d="M609.5 152 Q621 145 632 150.5" stroke="#2e2220" stroke-width="2" fill="none"/>
 <path d="M645 150 Q655 146 665.5 151 L664 162 Q655 167 646 161 Z" fill="#f4f6fa"/>
 <ellipse cx="655" cy="157.5" rx="6.5" ry="7" fill="#3cc4c0"/>
 <ellipse cx="655" cy="160" rx="4.5" ry="4" fill="#6ee0d8" opacity=".8"/>
 <ellipse cx="655" cy="156" rx="2.6" ry="3" fill="#1a4e58"/>
 <circle cx="652" cy="154" r="1.6" fill="#fff"/>
 <path d="M644 150.5 Q655 145 666.5 152" stroke="#2e2220" stroke-width="2" fill="none"/>
 <path d="M612 146 Q620 143 629 145 M647 145 Q656 143 664 146" stroke="#c89070" stroke-width="1" fill="none"/>
 <path d="M632 178 Q638 180 644 178" stroke="#b8806a" stroke-width=".8" fill="none"/>
 <!-- bangs -->
 <path d="M600 150 C600 126 614 109 638 108 C662 109 678 124 679 150 L677 162 L671 140 L668 150 L662 130 L659 142 L652 124 L649 138 L644 122 L640 152 L636 128 L630 150 L628 130 L621 146 L620 132 L612 150 L608 146 L604 164 Z" fill="#cf9468" stroke="#4a3020" stroke-width=".5"/>
 <path d="M603 128 Q620 121 638 124 Q656 121 675 128 L675 134 Q656 128 638 131 Q620 128 603 134 Z" fill="#f0c8a4" opacity=".55"/>
 <path d="M604 146 L608 140 L612 195 L609 208 L606 192 Z M672 146 L668 140 L665 192 L668 206 L671 192 Z" fill="#b4784e" stroke="#4a3020" stroke-width=".4"/>
 <!-- collar -->
 <path d="M619 198 L637.5 205 L657 198 L660 210 L637.5 212 L616 210 Z" fill="#eef0f6" stroke="#888" stroke-width=".5"/>
 <!-- legs -->
 <path d="M586 420 L631 422 L629 480 L628 531 L596 531 L598 509 L596 481 Z" fill="url(#leg)" stroke="#6a5040" stroke-width=".6"/>
 <path d="M644 422 L689 420 L679 481 L679 531 L647 531 L646 480 Z" fill="url(#leg)" stroke="#6a5040" stroke-width=".6"/>
 <!-- socks -->
 <path d="M596 531 L628 531 L630 600 L630 652 L607 652 L606 600 Z" fill="url(#sock)" stroke="#2a2a30" stroke-width=".6"/>
 <path d="M647 531 L680 531 L670 600 L668 652 L645 652 L646 600 Z" fill="url(#sock)" stroke="#2a2a30" stroke-width=".6"/>
 <!-- shoes -->
 <path d="M606 648 L631 648 C634 656 637 664 637 676 C637 682 634 684 618 684 C603 684 600 682 600 676 C600 664 603 656 606 648 Z" fill="url(#shoe)" stroke="#3a2418" stroke-width=".6"/>
 <path d="M604 662 Q618 656 634 662" stroke="#b07a5c" stroke-width="1.4" fill="none"/>
 <path d="M602 672 Q618 668 636 672" stroke="#5a3424" stroke-width="1" fill="none"/>
 <path d="M645 647 L670 647 C673 655 676 664 676 676 C676 682 673 684 658 684 C643 684 640 682 640 676 C640 664 642 655 645 647 Z" fill="url(#shoe)" stroke="#3a2418" stroke-width=".6"/>
 <path d="M643 661 Q658 655 673 661" stroke="#b07a5c" stroke-width="1.4" fill="none"/>
 <path d="M641 672 Q658 668 675 672" stroke="#5a3424" stroke-width="1" fill="none"/>
 <!-- skirt -->
 <path d="M588 336 L688 336 C696 350 708 372 720 400 L700 412 L673 417 L637 420 L600 416 L577 410 L557 398 C568 372 580 350 588 336 Z" fill="url(#skirt)" stroke="#3a1a18" stroke-width=".6"/>
 <g stroke="#6a2622" stroke-width="3.5" opacity=".5" fill="none">
  <path d="M604 338 L588 412 M624 340 L616 418 M637 342 L637 420 M652 340 L660 418 M672 338 L688 414"/>
 </g>
 <g stroke="#d08a78" stroke-width="1.1" opacity=".7" fill="none">
  <path d="M582 352 L694 352 M580 357 L697 357"/>
  <path d="M570 377 L706 377 M567 383 L709 383"/>
  <path d="M596 338 L578 408 M612 340 L602 414 M664 340 L674 414 M680 338 L698 410"/>
 </g>
 <path d="M557 398 L577 410 L600 416 L637 420 L673 417 L700 412 L720 400" fill="none" stroke="#f2f2f6" stroke-width="4" stroke-linejoin="round"/>
 <path d="M557 401 L577 413 L600 419 L637 423 L673 420 L700 415 L720 403" fill="none" stroke="#fafafa" stroke-width="3.6" stroke-dasharray="0.1 3.6" stroke-linecap="round"/>
 <path d="M560 403 L577 415 L600 421 L637 425 L673 422 L700 417 L718 406" fill="none" stroke="#9a9aa0" stroke-width=".6" stroke-dasharray="2 2"/>
 <!-- vest -->
 <path d="M604 208 L612 208 L637.5 242 L663.5 208 L670 208 L676 225 L679.5 245 L676 262 L673 294 L682 314 L689 330 L676 338 L660 345 L641 352 L637 340 L633 352 L616 345 L600 338 L585 330 L592 314 L602 294 L598 262 L597.5 245 L600 225 Z" fill="url(#vest)" stroke="#3a1a18" stroke-width=".6"/>
 <!-- shirt V -->
 <path d="M624 212 L651 212 L637.5 242 Z" fill="#eef0f6"/>
 <!-- vest plaid -->
 <clipPath id="vclip"><path d="M604 208 L612 208 L637.5 242 L663.5 208 L670 208 L676 225 L679.5 245 L676 262 L673 294 L682 314 L689 330 L676 338 L660 345 L641 352 L637 340 L633 352 L616 345 L600 338 L585 330 L592 314 L602 294 L598 262 L597.5 245 L600 225 Z"/></clipPath>
 <g clip-path="url(#vclip)">
 <g stroke="#c8806c" stroke-width="1.2" opacity=".8">
  <path d="M596 233 L628 236 M648 236 L682 233"/>
  <path d="M598 268 L676 268 M598 272 L676 272"/>
  <path d="M600 300 L676 300 M598 304 L678 304"/>
  <path d="M590 326 L686 326 M592 330 L684 330"/>
  <path d="M610 222 L612 345 M664 222 L662 345"/>
 </g>
 <g stroke="#6a2824" stroke-width="3" opacity=".6">
  <path d="M620 230 L622 345 M654 230 L652 345"/>
 </g>
 </g>
 <!-- buttons -->
 <circle cx="636" cy="252" r="3.2" fill="#c8b090" stroke="#554" stroke-width=".5"/>
 <circle cx="636" cy="287" r="3.2" fill="#c8b090" stroke="#554" stroke-width=".5"/>
 <circle cx="637" cy="320" r="3.2" fill="#c8b090" stroke="#554" stroke-width=".5"/>
 <path d="M655 244 L660.5 241 L666 244 L666 250 L660.5 253 L655 250 Z" fill="#c8b898" stroke="#554" stroke-width=".5"/>
 <!-- vest hem lace -->
 <path d="M585 330 L600 338 L616 345 L633 352 L637 340 L641 352 L660 345 L676 338 L689 330" fill="none" stroke="#f4f4f8" stroke-width="3" stroke-linejoin="round"/>
 <path d="M585 333 L600 341 L616 348 L634 355 M640 355 L660 348 L676 341 L690 333" fill="none" stroke="#fcfcfc" stroke-width="3.4" stroke-dasharray="0.1 3.4" stroke-linecap="round"/>
 <!-- bow -->
 <path d="M633 210C625 205 614 204 611 210C610 219 614 228 624 235L634 219Z" fill="#55555f" stroke="#34343c" stroke-width=".6"/>
 <path d="M642 210C650 205 661 204 664.5 210C665 219 661 228 652 235L641 219Z" fill="#55555f" stroke="#34343c" stroke-width=".6"/>
 <rect x="632" y="207" width="11" height="11" rx="2" fill="#4a4a54"/>
 <!-- 3D manipulator icons -->
 <g fill="#c8c8fb" stroke="#c8c8fb" stroke-width="4.5" stroke-linejoin="round" opacity=".95">
  <path d="M416 117a8 8 0 0 0 2 11l4 2h7l4-4" fill="none" stroke-width="7"/>
  <path d="M424 116l4 3.5-4 3.5zM428 116h4v7h-4z"/>
  <path d="M437 121l3-3v6zM458 121l-3-3v6zM447.5 113l-2.5 3h5zM447.5 131l-2.5-3h5z"/>
  <path d="M444 118l4 3-4 3zM448 118h3v6h-3z"/>
  <path d="M465 113l-3.5 6h7zM465 131l-3.5-6h7z"/><path d="M465 118v8" stroke-width="6.5" fill="none"/>
  <path d="M471 116l4 3.5-4 3.5zM475 116h4v7h-4z"/>
  <path d="M487 120l3-3v6zM507 120l-3-3v6zM497 112l-2.5 3h5zM497 132l-2.5-3h5z"/>
  <path d="M492 119l5-3 5 3v5l-5 3-5-3z"  stroke-width="4.5"/>
  <path d="M516 116a9 9 0 0 0 -2 12" fill="none" stroke-width="7.5"/>
  <path d="M519 121l6-3.5 6 3.5v7l-6 3.5-6-3.5z"  stroke-width="4.5"/>
  <path d="M540 117l6-3.5 6 3.5v7l-6 3.5-6-3.5z"  stroke-width="4.5"/>
  <path d="M539 126q3 5 10 5l6-2" fill="none" stroke-width="6.5"/>
  <path d="M575 116l-2-2.5h4zM575 124l-2 2.5h4zM571 120l2.5-2v4zM579 120l-2.5-2v4z"/><path d="M575 114v10M571 120h8" fill="none" stroke-width="5"/>
  <path d="M562 128l9-4 10 4-10 4z"  stroke-width="4.5"/><rect x="568" y="122" width="6" height="5"  stroke-width="4.5"/>
 </g>
 <g fill="#8a8ac2" stroke="#7878b0" stroke-width="0">
  <path d="M416 117a8 8 0 0 0 2 11l4 2h7l4-4" fill="none" stroke-width="3.5"/>
  <path d="M424 116l4 3.5-4 3.5zM428 116h4v7h-4z"/>
  <path d="M437 121l3-3v6zM458 121l-3-3v6zM447.5 113l-2.5 3h5zM447.5 131l-2.5-3h5z"/>
  <path d="M444 118l4 3-4 3zM448 118h3v6h-3z"/>
  <path d="M465 113l-3.5 6h7zM465 131l-3.5-6h7z"/><path d="M465 118v8" stroke-width="3" fill="none"/>
  <path d="M471 116l4 3.5-4 3.5zM475 116h4v7h-4z"/>
  <path d="M487 120l3-3v6zM507 120l-3-3v6zM497 112l-2.5 3h5zM497 132l-2.5-3h5z"/>
  <path d="M492 119l5-3 5 3v5l-5 3-5-3z" fill="#b8b8ec" stroke-width="1" stroke="#6a6aa2"/>
  <path d="M516 116a9 9 0 0 0 -2 12" fill="none" stroke-width="4"/>
  <path d="M519 121l6-3.5 6 3.5v7l-6 3.5-6-3.5z" fill="#c8c8f8" stroke-width="1" stroke="#6a6aa2"/>
  <path d="M540 117l6-3.5 6 3.5v7l-6 3.5-6-3.5z" fill="#c8c8f8" stroke-width="1" stroke="#6a6aa2"/>
  <path d="M539 126q3 5 10 5l6-2" fill="none" stroke-width="3"/>
  <path d="M575 116l-2-2.5h4zM575 124l-2 2.5h4zM571 120l2.5-2v4zM579 120l-2.5-2v4z"/><path d="M575 114v10M571 120h8" fill="none" stroke-width="1.4"/>
  <path d="M562 128l9-4 10 4-10 4z" fill="#c8c8f8" stroke-width="1" stroke="#6a6aa2"/><rect x="568" y="122" width="6" height="5" fill="#a8a8dc" stroke-width=".8" stroke="#6a6aa2"/>
 </g>
</svg>


<!-- sub view window -->
<div class="a" style="left:225px;top:90px;width:308px;height:22px;background:linear-gradient(#4a4a4a,#2e2e2e);border:1px solid #1e1e1e;box-shadow:0 2px 3px rgba(0,0,0,.5)"></div>
<svg style="left:232px;top:94px" width="14" height="12"><path d="M1 2l4 4-4 4z" fill="#6a6a6a"/><path d="M6 2.5h6M6 6h6M6 9.5h6" stroke="#6a6a6a" stroke-width="1.6"/></svg>
<div class="t tt" style="left:363px;top:95px;--w:32px">サブビュー</div>
<svg style="left:500px;top:92px" width="30" height="16"><circle cx="7" cy="7" r="6.5" fill="#222" stroke="#bbb"/><rect x="3" y="6" width="8" height="3" fill="#ddd"/><circle cx="21" cy="7" r="6.5" fill="#222" stroke="#bbb"/><path d="M18 4l6 6M24 4l-6 6" stroke="#eee" stroke-width="2"/></svg>

<!-- 3d float toolbar -->
<svg style="left:420px;top:683px" width="430" height="31" viewBox="420 683 430 31">
 <rect x="422" y="684.5" width="277" height="27" fill="#646464" fill-opacity=".8" stroke="#111" stroke-width="1.2"/>
 <rect x="706" y="684.5" width="142" height="27" fill="#646464" fill-opacity=".8" stroke="#111" stroke-width="1.2"/>
 <path d="M482.5 686v24M575.5 686v24M669.5 686v24" stroke="#505050"/><path d="M483.5 686v24M576.5 686v24M670.5 686v24" stroke="#8a8a8a"/>
 <path d="M439 693l-4 5 4 5M465 693l4 5-4 5" fill="none" stroke="#858585" stroke-width="2"/>
 <path d="M489 704l5-6h14l-4 6z" fill="#ddd" stroke="#333" stroke-width=".8"/><circle cx="503" cy="693" r="4" fill="#eee" stroke="#333"/><path d="M496 698l4-4" stroke="#333"/>
 <path d="M523 692h-3v3M534 692h3v3M523 704h-3v-3M534 704h3v-3M528 695v6M525 698h6" stroke="#8a8a8a" fill="none"/>
 <path d="M551 699l6-3 6 3-6 3z" fill="#ddd" stroke="#666" stroke-width=".6"/><path d="M551 699v3l6 3 6-3v-3" fill="#aaa"/><path d="M557 689v6" stroke="#888" stroke-width="1.5"/>
 <path d="M579 690h10v8h-10z" fill="#888" opacity=".6"/><path d="M585 692v14" stroke="#333" stroke-width="1" opacity=".5"/>
 <path d="M612 695l5 4-5 4z" fill="#eee"/>
 <circle cx="621" cy="698" r="6" fill="none" stroke="#6a6a6a" opacity=".6"/>
 <g stroke="#e8e8e8" stroke-width="1.3"><path d="M649 690v3M649 703v3M641 698h3M654 698h3M643.5 692.5l2 2M652.5 701.5l2 2M643.5 703.5l2-2M652.5 694.5l2-2"/></g>
 <rect x="672" y="686" width="25" height="24" fill="#8a8a8a"/>
 <path d="M677 692q5-3 9 0t8 0v12q-4 3-8 0t-9 0z" fill="#fff" stroke="#666" stroke-width=".6"/>
 <!-- head/face/hair/body/bag -->
 <path d="M712 691q10-5 20 0v10q-2 6-10 7q-8-1-10-7z" fill="#e8e8e8" stroke="#555"/><path d="M722 690v17M712 698h20" stroke="#333"/>
 <path d="M740 691q10-5 20 0v10q-2 6-10 7q-8-1-10-7z" fill="#e8e8e8" stroke="#555"/><path d="M745 699q5 4 10 0M746 694v2M754 694v2" stroke="#333" fill="none"/>
 <path d="M768 708q-2-10 6-14 4-6 10-4-2 3 1 6 3 5 0 12z" fill="#999" stroke="#555"/>
 <path d="M801 689h10v9h-2v12h-2v-8h-2v8h-2v-12h-2z" fill="#e8e8e8" stroke="#555" stroke-width=".8"/>
 <path d="M826 697h14v12h-14z" fill="#aaa" stroke="#555"/><path d="M829 697q0-7 5-7t5 7" fill="none" stroke="#333" stroke-width="1.2"/>
</svg>
<!-- status bar -->
<div class="a" style="left:227px;top:713px;width:838px;height:14px;background:#646468"></div>
<svg style="left:227px;top:713px" width="838" height="14" viewBox="227 713 838 14">
 <rect x="227" y="714" width="98" height="12" fill="#6a6a6d"/><path d="M227 726L325 715V726Z" fill="#2a2a2c"/>
 <rect x="276" y="714" width="4" height="12" fill="#6a6a6d" stroke="#555" stroke-width=".5"/>
 <rect x="326" y="714" width="61" height="12" fill="#6a6a6d"/>
 <circle cx="337" cy="719" r="4.5" fill="#fff" stroke="#111" stroke-width="1.4"/><path d="M335 719h4M340 722l3 3" stroke="#111" stroke-width="1.5"/>
 <circle cx="357" cy="719" r="4.5" fill="#fff" stroke="#111" stroke-width="1.4"/><path d="M355 719h4M357 717v4M360 722l3 3" stroke="#111" stroke-width="1.5"/>
 <rect x="371" y="714" width="12" height="12" fill="#111"/><rect x="373.5" y="716.5" width="7" height="7" fill="none" stroke="#555"/>
 <rect x="388" y="714" width="98" height="12" fill="#6a6a6d"/><path d="M388 714L409 726H426L447 714H464L486 726H388Z" fill="#2a2a2c"/>
 <rect x="435" y="714" width="4" height="12" fill="#6a6a6d" stroke="#555" stroke-width=".5"/>
 <rect x="486" y="714" width="61" height="12" fill="#6a6a6d"/>
 <path d="M494 724a4.5 4.5 0 1 1 8 -2" fill="none" stroke="#111" stroke-width="2"/><path d="M492 721l3 4 3-3z" fill="#111"/>
 <path d="M520 724a4.5 4.5 0 1 0 -8 -2" fill="none" stroke="#111" stroke-width="2"/><path d="M522 721l-3 4-3-3z" fill="#111"/>
 <circle cx="537" cy="720" r="4.5" fill="none" stroke="#555" stroke-width="1.8" stroke-dasharray="2 1.5"/>
 <rect x="548" y="714.5" width="10" height="11" rx="1" fill="#6a6a6d" stroke="#888" stroke-width=".8"/><path d="M551 720l4-3v6z" fill="#111"/>
 <rect x="558" y="714" width="482" height="12" fill="#707073"/><rect x="558" y="724" width="482" height="2" fill="#606063"/>
 <rect x="698" y="714" width="200" height="12" rx="1" fill="#6a6a6d" stroke="#808083" stroke-width=".6"/>
 <path d="M794 717v6M797 717v6M800 717v6" stroke="#333" stroke-width="1"/>
 <rect x="1041" y="714.5" width="11" height="11" rx="1" fill="#6a6a6d" stroke="#888" stroke-width=".8"/><path d="M1048 720l-4-3v6z" fill="#111"/>
 <rect x="1052" y="713" width="13" height="14" fill="#5f5f62"/>
</svg>
<div class="t" style="left:228px;top:715px;font-size:11.5px;color:#f4f4f4;--w:19px">59.7</div>
<div class="t" style="left:390px;top:715px;font-size:11.5px;color:#f4f4f4;--w:14px">0.0</div>


<!-- ============ RIGHT SIDE ============ -->
<div class="a" style="left:1065px;top:48px;width:14px;height:680px;background:linear-gradient(90deg,#363638,#646468 50%,#3a3a3c)"></div>
<div class="a" style="left:1065px;top:48px;width:301px;height:20px;background:linear-gradient(#4c4c4e,#3a3a3c);border-bottom:1px solid #2a2a2c"></div>
<svg style="left:0;top:0" width="1366" height="70" viewBox="0 0 1366 70"><path d="M37 52l-5 6 5 6h2.5l-5-6 5-6zM42 52l-5 6 5 6h2.5l-5-6 5-6zM217 52l-5 6 5 6h2.5l-5-6 5-6zM222 52l-5 6 5 6h2.5l-5-6 5-6zM1071 52l-5 6 5 6h2.5l-5-6 5-6zM1076 52l-5 6 5 6h2.5l-5-6 5-6zM1080 52l5 6-5 6h2.5l5-6-5-6zM1085 52l5 6-5 6h2.5l5-6-5-6z" fill="#8c8c8f"/><path d="M1078.5 48v20" stroke="#2e2e30"/></svg>
<div class="a" style="left:1079px;top:68px;width:287px;height:660px;background:#69696d"></div>
<div class="a" style="left:1078px;top:68px;width:2px;height:660px;background:#3e3e40"></div>
<!-- navigator -->
<div class="a" style="left:1080px;top:69px;width:285px;height:22px;background:#6a6a6e"></div>
<div class="hd" style="left:1080px;top:69px;width:285px;height:18px"></div>
<div class="mi" style="left:1081px;top:70px;height:17px"></div>
<div class="tab" style="left:1099px;top:72px;width:73px;height:19px"></div>
<svg style="left:1103px;top:73px" width="20" height="18"><rect x="6" y="6" width="11" height="9" fill="#eee" stroke="#999"/><rect x="3" y="3" width="11" height="9" fill="#fff" stroke="#e00000" stroke-width="2"/></svg>
<div class="t tt" style="left:1125px;top:75px;--w:42px">ナビゲーター</div>
<div class="a" style="left:1080px;top:91px;width:285px;height:114px;background:#333"></div>
<div class="a" style="left:1158px;top:100px;width:130px;height:97px;border:2px solid #e00000"></div>
<div class="a" style="left:1166px;top:102px;width:112px;height:93px;background:#fff"></div>
<svg style="left:1085px;top:209px" width="135" height="42">
 <rect x="0.5" y="4.5" width="130" height="11.5" fill="#6a6a6e" stroke="#1e1e20"/><path d="M5 16L119 4.5H130.5V16Z" fill="#262628"/>
 <rect x="0.5" y="24.5" width="130" height="11" fill="#6a6a6e" stroke="#1e1e20"/><path d="M0.5 25L28 35.5H51L79 25H101L130.5 35.5H0.5Z" fill="#262628"/>
 <rect x="66.5" y="0.5" width="3.5" height="19" fill="#6a6a6e" stroke="#444"/>
 <rect x="63.5" y="20.5" width="3.5" height="20" fill="#6a6a6e" stroke="#444"/>
</svg>
<div class="t" style="left:1241px;top:213px;font-size:12px;color:#eee;--w:19px">59.7</div>
<div class="t" style="left:1247px;top:233px;font-size:12px;color:#eee;--w:13px">0.0</div>
<svg style="left:1263px;top:209px" width="100" height="40">
 <circle cx="7" cy="7" r="5.5" fill="#fff" stroke="#111" stroke-width="1.6"/><path d="M4 7h6M11 11l3 4" stroke="#111" stroke-width="2"/>
 <circle cx="27" cy="7" r="5.5" fill="#fff" stroke="#111" stroke-width="1.6"/><path d="M24 7h6M27 4v6M31 11l3 4" stroke="#111" stroke-width="2"/>
 <rect x="40" y="1" width="16" height="16" fill="#111"/><rect x="43" y="4" width="10" height="10" fill="none" stroke="#555"/>
 <path d="M61 2v14" stroke="#444"/>
 <rect x="65" y="2" width="14" height="13" fill="#fff" stroke="#111"/><path d="M68 5l8 8" stroke="#111" stroke-width="2"/>
 <rect x="83" y="2" width="15" height="13" fill="#fff" stroke="#111"/><path d="M86 5l9 8" stroke="#111" stroke-width="2"/>
 <path d="M3 30a5 5 0 1 1 8 2" fill="none" stroke="#111" stroke-width="2.4"/><path d="M1 28l3 5 4-3z" fill="#111"/>
 <path d="M33 30a5 5 0 1 0 -8 2" fill="none" stroke="#111" stroke-width="2.4"/><path d="M35 28l-3 5-4-3z" fill="#111"/>
 <circle cx="48" cy="31" r="6" fill="none" stroke="#555" stroke-width="2" stroke-dasharray="2 2"/>
 <path d="M61 24v14" stroke="#444"/>
 <path d="M66 34a6 6 0 0 1 12 0" fill="none" stroke="#111" stroke-width="2"/><path d="M66 30l4 4-4 4zM78 30l-4 4 4 4z" fill="#eee"/>
 <path d="M84 34a6 6 0 0 1 12 0" fill="none" stroke="#111" stroke-width="2"/><path d="M90 38l4-5h-8z" fill="#eee"/>
</svg>
<!-- info -->
<div class="a" style="left:1079px;top:250px;width:287px;height:1px;background:#727275"></div>
<div class="hd" style="left:1080px;top:251px;width:285px;height:17px"></div>
<div class="mi" style="left:1081px;top:252px;height:14px"></div>
<div class="tab" style="left:1099px;top:253px;width:49px;height:15px"></div>
<svg style="left:1103px;top:253px" width="16" height="15"><circle cx="7.5" cy="7.5" r="7" fill="#222"/><circle cx="7.5" cy="4" r="1.6" fill="#fff"/><rect x="6" y="6.5" width="3" height="6" fill="#fff"/></svg>
<div class="t tt" style="left:1124px;top:256px;--w:20px">情報</div>
<div class="t" style="left:1079px;top:273px;font-size:12px;color:#f2f2f2;--w:152px">システム:58% アプリケーション:19%</div>
<!-- layer property -->
<div class="a" style="left:1079px;top:290px;width:287px;height:1px;background:#727275"></div>
<div class="hd" style="left:1080px;top:291px;width:285px;height:17px"></div>
<div class="mi" style="left:1081px;top:292px;height:14px"></div>
<div class="tab" style="left:1099px;top:293px;width:91px;height:15px"></div>
<svg style="left:1102px;top:293px" width="20" height="16"><rect x="1" y="12" width="16" height="3" fill="#111"/><path d="M2 8l4 4 10-10" fill="none" stroke="#e00000" stroke-width="2.2"/></svg>
<div class="t tt" style="left:1125px;top:296px;--w:62px">レイヤープロパティ</div>
<div class="a" style="left:1080px;top:308px;width:270px;height:29px;background:#69696d;border:1px solid #38383a"></div>
<div class="a" style="left:1082px;top:323px;width:266px;height:1px;background:#7a7a7c"></div>
<div class="a" style="left:1087px;top:315px;width:30px;height:15px;background:#69696d"></div>
<div class="t" style="left:1090px;top:316px;font-size:12px;color:#eee;--w:23px">効果</div>
<div class="a" style="left:1352px;top:314px;width:11px;height:10px;background:#6a6a6d;border:1px solid #444"></div>
<div class="a" style="left:1352px;top:325px;width:11px;height:10px;background:#6a6a6d;border:1px solid #444"></div>
<div class="a" style="left:1240px;top:331px;width:102px;height:6px;background:#6a6a6d;border:1px solid #444;border-bottom:none"></div>
<!-- layer search -->
<div class="a" style="left:1079px;top:339px;width:287px;height:1px;background:#727275"></div>
<div class="hd" style="left:1080px;top:340px;width:285px;height:16px"></div>
<div class="mi" style="left:1081px;top:341px;height:13px"></div>
<div class="tab" style="left:1099px;top:342px;width:76px;height:14px"></div>
<svg style="left:1102px;top:341px" width="20" height="16"><path d="M2 4h10M2 7h10M2 10h10" stroke="#ddd" stroke-width="2"/><circle cx="12" cy="10" r="4" fill="#fff" stroke="#111"/><path d="M15 13l3 3" stroke="#111" stroke-width="2"/></svg>
<div class="t tt" style="left:1125px;top:344px;--w:47px">レイヤー検索</div>
<div class="a" style="left:1082px;top:361px;width:204px;height:19px;background:#6a6a6e;border:1px solid #3a3a3c;border-radius:2px"></div>
<div class="a" style="left:1150px;top:364px;width:13px;height:12px;background:#2aa8f8"></div>
<div class="a" style="left:1157px;top:370px;width:7px;height:7px;background:#fff;border:1px solid #222"></div>
<div class="t" style="left:1169px;top:364px;font-size:12px;color:#f2f2f2;--w:38px">べた塗り</div>
<svg style="left:1272px;top:367px" width="10" height="6"><path d="M0 0h9L4.5 5z" fill="#222"/></svg>
<div class="a" style="left:1290px;top:361px;width:36px;height:19px;background:#6a6a6e;border:1px solid #3a3a3c;border-radius:2px"></div>
<div class="a" style="left:1330px;top:361px;width:35px;height:19px;background:#6a6a6e;border:1px solid #3a3a3c;border-radius:2px"></div>
<svg style="left:1293px;top:362px" width="70" height="18">
 <circle cx="8" cy="7" r="5" fill="#fff" stroke="#111" stroke-width="1.5"/><circle cx="13" cy="12" r="3" fill="none" stroke="#111" stroke-width="2"/><path d="M4 11l-3 4" stroke="#111" stroke-width="2"/><path d="M21 7h8l-4 5z" fill="#222"/>
 <circle cx="48" cy="7" r="5" fill="#fff" stroke="#111" stroke-width="1.5"/><path d="M50 10l5 5M55 10l-5 5" stroke="#111" stroke-width="1.8"/><path d="M44 11l-3 4" stroke="#111" stroke-width="2"/><path d="M60 7h8l-4 5z" fill="#222"/>
</svg>
<div class="a" style="left:1080px;top:384px;width:285px;height:57px;background:#69696d;border:1px solid #333"></div>
<svg style="left:1081px;top:443px" width="285" height="18">
 <rect x="0" y="0" width="28" height="18" rx="3" fill="#6a6a6e" stroke="#555"/><path d="M4 5l5-3h6v9l-5 3H4z" fill="#777" stroke="#999"/><path d="M12 11l4 5" stroke="#999" stroke-width="1.5"/>
 <rect x="248" y="2" width="12" height="12" fill="#2aa8f8"/><rect x="254" y="9" width="7" height="7" fill="#fff" stroke="#222"/>
 <path d="M266 6h14l-2 11h-10z" fill="#777" stroke="#999"/>
</svg>
<!-- layer panel -->
<div class="a" style="left:1079px;top:463px;width:287px;height:1px;background:#727275"></div>
<div class="hd" style="left:1080px;top:464px;width:285px;height:17px"></div>
<div class="mi" style="left:1081px;top:465px;height:14px"></div>
<div class="tab" style="left:1099px;top:465px;width:56px;height:16px"></div>
<div class="a" style="left:1157px;top:466px;width:65px;height:14px;background:#4a4a4c;border:1px solid #333"></div>
<svg style="left:1103px;top:466px" width="18" height="15"><path d="M2 3l7-2 7 2-7 2zM2 7l7-2 7 2-7 2zM2 11l7-2 7 2-7 2z" fill="#ddd" stroke="#111" stroke-width=".8"/></svg>
<svg style="left:1161px;top:466px" width="18" height="15"><circle cx="6" cy="8" r="5" fill="#777" stroke="#222"/><circle cx="12" cy="8" r="4" fill="none" stroke="#222" stroke-width="1.5"/></svg>
<div class="t tt" style="left:1124px;top:468px;--w:29px">レイヤー</div>
<div class="t tt" style="left:1183px;top:468px;color:#9a9a9c;--w:36px">ヒストリー</div>
<div class="a" style="left:1082px;top:486px;width:138px;height:18px;background:#6a6a6e;border:1px solid #3a3a3c;border-radius:2px"></div>
<div class="t" style="left:1132px;top:489px;font-size:12px;color:#f2f2f2;--w:26px">通常</div>
<svg style="left:1207px;top:492px" width="10" height="6"><path d="M0 0h9L4.5 5z" fill="#222"/></svg>
<div class="a" style="left:1227px;top:491px;width:96px;height:9px;border:1px solid #555;background:repeating-linear-gradient(90deg,#fff 0 4px,#d0d0d0 4px 8px)"></div>
<div class="a" style="left:1322px;top:486px;width:3px;height:18px;background:#555"></div>
<div class="t" style="left:1331px;top:489px;font-size:12px;color:#f2f2f2;--w:18px">100</div>
<svg style="left:1349px;top:486px" width="12" height="18"><path d="M1 7h9L5.5 2zM1 11h9L5.5 16z" fill="#222"/></svg>
<svg style="left:1081px;top:506px" width="285" height="20">
 <rect x="1" y="1" width="37" height="18" rx="2" fill="#6a6a6e" stroke="#3a3a3c"/><rect x="3" y="4" width="14" height="13" fill="#69696d" stroke="#222"/><path d="M24 8h9l-4.5 5z" fill="#222"/>
 <ellipse cx="81" cy="10" rx="7" ry="4" fill="#444" stroke="#111"/><ellipse cx="81" cy="8" rx="7" ry="3" fill="#888" stroke="#111"/>
 <path d="M100 5l4 2 4-2M104 7v10" stroke="#eee" stroke-width="2"/>
 <path d="M119 3l3-1 3 1v11l-3 4-3-4z" fill="#2aa8f8" stroke="#e0c020"/>
 <rect x="134" y="9" width="11" height="9" fill="#111"/><path d="M136 9V6a3.5 3.5 0 0 1 7 0v3" fill="none" stroke="#111" stroke-width="1.8"/>
 <rect x="151" y="9" width="8" height="6" fill="#777"/><path d="M152 9V6a3 3 0 0 1 6 0v3" fill="none" stroke="#777" stroke-width="1.5"/>
 <rect x="182" y="1" width="36" height="18" rx="2" fill="#6a6a6e" stroke="#3a3a3c"/><path d="M187 6l6 8 5-3" fill="none" stroke="#777" stroke-width="2"/><path d="M205 8h8l-4 5z" fill="#444"/>
 <rect x="219" y="1" width="36" height="18" rx="2" fill="#6a6a6e" stroke="#3a3a3c"/><path d="M222 4h12l-8 14z" fill="#2aa8f8" stroke="#111"/><path d="M229 12l6 6M235 12l-6 6" stroke="#e00000" stroke-width="2"/><path d="M242 8h8l-4 5z" fill="#222"/>
 <rect x="256" y="1" width="29" height="18" rx="2" fill="#6a6a6e" stroke="#3a3a3c"/><rect x="259" y="4" width="9" height="9" fill="#3a8ae0"/><rect x="263" y="8" width="7" height="7" fill="#fff"/><path d="M274 8h8l-4 5z" fill="#222"/>
</svg>
<div class="a" style="left:1083px;top:530px;width:279px;height:175px;background:#69696d;border:1px solid #333"></div>
<div class="a" style="left:1350px;top:531px;width:12px;height:173px;background:#555558"></div>
<div class="a" style="left:1123px;top:531px;width:227px;height:33px;background:linear-gradient(#7a929e,#6a828e);border:1px solid #8aa2ae"></div>
<div class="a" style="left:1083px;top:564px;width:267px;height:1px;background:#333"></div>
<div class="a" style="left:1083px;top:599px;width:267px;height:1px;background:#333"></div>
<div class="a" style="left:1083px;top:634px;width:267px;height:1px;background:#333"></div>
<div class="a" style="left:1104px;top:531px;width:1px;height:103px;background:#333"></div>
<div class="a" style="left:1122px;top:531px;width:1px;height:103px;background:#333"></div>
<svg style="left:1086px;top:540px" width="20" height="90"><g fill="#fff" stroke="#111"><ellipse cx="7" cy="8" rx="6" ry="4"/><ellipse cx="7" cy="43" rx="6" ry="4"/><ellipse cx="7" cy="78" rx="6" ry="4"/></g><g fill="#111"><circle cx="7" cy="8" r="2.5"/><circle cx="7" cy="43" r="2.5"/><circle cx="7" cy="78" r="2.5"/></g></svg>
<svg style="left:1106px;top:538px" width="16" height="18"><path d="M2 15l10-12 2 2-10 10z" fill="#ddd" stroke="#111" stroke-width=".8"/></svg>
<div class="a" style="left:1128px;top:532px;width:36px;height:29px;border:1px solid #111;background:repeating-conic-gradient(#fff 0 25%,#ccc 0 50%) 0 0/8px 8px"></div>
<div class="a" style="left:1138px;top:533px;width:4px;height:26px;background:#c07060;opacity:.7"></div>
<div class="a" style="left:1147px;top:532px;width:18px;height:19px;background:#fff;border:1px solid #111"></div>
<svg style="left:1148px;top:533px" width="18" height="18"><path d="M9 2l6 6-6 6-6-6z" fill="#111"/></svg>
<svg style="left:1176px;top:536px" width="24" height="24"><path d="M0 12l3 3 4-6" stroke="#111" stroke-width="1.5" fill="none"/><rect x="10" y="3" width="12" height="17" fill="#f0e0a0" stroke="#111"/><path d="M10 3h12l-12 12z" fill="#2aa8f8"/><path d="M12 8l9 10M21 8l-9 10" stroke="#e00000" stroke-width="2"/></svg>
<div class="t" style="left:1201px;top:534px;font-size:12px;color:#fff;--w:53px">100 %通常</div>
<div class="t" style="left:1201px;top:549px;font-size:12px;color:#fff;--w:88px">女子学生A-Ver.3</div>
<div class="a" style="left:1129px;top:568px;width:34px;height:28px;border:1px solid #222;background:repeating-conic-gradient(#fff 0 25%,#ccc 0 50%) 0 0/8px 8px"></div>
<div class="t" style="left:1167px;top:569px;font-size:12px;color:#fff;--w:53px">100 %通常</div>
<div class="t" style="left:1167px;top:584px;font-size:12px;color:#fff;--w:47px">レイヤー 1</div>
<div class="a" style="left:1129px;top:603px;width:34px;height:28px;border:1px solid #222;background:#fff"></div>
<svg style="left:1169px;top:602px" width="20" height="20"><rect x="1" y="1" width="18" height="18" fill="#fff" stroke="#111"/><path d="M5 4h6l4 4v9H5z" fill="#fff" stroke="#111"/></svg>
<div class="t" style="left:1189px;top:618px;font-size:12px;color:#fff;--w:25px">用紙</div>
<svg style="left:1082px;top:707px" width="284" height="20">
 <path d="M3 5l7-3 7 3-7 3zM3 9l7-3 7 3-7 3zM3 13l7-3 7 3-7 3z" fill="#ddd" stroke="#111" stroke-width=".8"/>
 <path d="M125 3h12v10l-4 4h-8z" fill="#f8f8f8" stroke="#222"/>
 <path d="M143 3h12v14h-12z" fill="#f0f0f0" stroke="#222"/><rect x="150" y="11" width="6" height="6" fill="#ccc" stroke="#222"/>
 <path d="M161 5h6l2 2h6v10h-14z" fill="#bbb" stroke="#222"/><path d="M166 8h10v9h-10z" fill="#f8f8f8" stroke="#222"/>
 <path d="M186 4h6v5h4l-7 7-7-7h4z" fill="#7a7a7a"/>
 <path d="M206 4h6v5h4l-7 7-7-7h4z" fill="#fff" stroke="#111"/>
 <rect x="223" y="6" width="16" height="9" fill="#222"/><circle cx="231" cy="10.5" r="3" fill="#fff"/>
 <path d="M246 4l10 3-10 10z" fill="#777"/>
 <path d="M263 5h12l-2 12h-8z" fill="#ddd" stroke="#111"/><ellipse cx="269" cy="5" rx="6" ry="2" fill="#ddd" stroke="#111"/>
</svg>
<div class="a" style="left:1364px;top:68px;width:2px;height:660px;background:#6a6a6e;border-right:1px solid #8a8a8e"></div>


<!-- taskbar -->
<div class="a" style="left:0;top:727px;width:1366px;height:1px;background:#7c80a8"></div>
<div class="a" style="left:0;top:728px;width:1366px;height:40px;background:#121218"></div>
<div class="a" style="left:0;top:728px;width:48px;height:40px;background:#161a20"></div>
<div class="a" style="left:48px;top:728px;width:344px;height:40px;background:#333333"></div>
<div class="a" style="left:884px;top:728px;width:48px;height:40px;background:#2c2c33"></div>
<svg style="left:0;top:728px" width="1366" height="40" viewBox="0 728 1366 40">
 <!-- windows logo -->
 <path d="M16 741.5l7-1v7h-7zM24 740.3l8.5-1.2v8.4H24zM16 748.5h7v7l-7-1zM24 748.5h8.5v8.4l-8.5-1.2z" fill="#fff"/>
 <!-- cortana -->
 <circle cx="68" cy="748" r="9" fill="none" stroke="#fff" stroke-width="2.6"/>
 <!-- mic -->
 <rect x="367" y="740" width="7" height="11" rx="3.5" fill="none" stroke="#9a9a9a" stroke-width="1.3"/><path d="M364 747a6.5 6.5 0 0 0 13 0M370.5 754v3M367 757h7" fill="none" stroke="#9a9a9a" stroke-width="1.3"/>
 <!-- task view -->
 <rect x="409" y="740" width="14" height="15" fill="none" stroke="#fff" stroke-width="1.6"/><path d="M406 742v11M426 742v11" stroke="#fff" stroke-width="1.3"/>
 <!-- edge -->
 <path d="M477 752c-2 3-5 4-9 4-6 0-10-4-10-9 0-6 5-10 10-10 6 0 9 4 9 9v2h-14c0 3 3 5 6 5 3 0 5-1 7-2z M463 745h9c0-2-2-4-4.5-4s-4 2-4.5 4z" fill="#1a82e0" fill-rule="evenodd"/>
 <rect x="447" y="766" width="40" height="2" fill="#b4a8ec"/>
 <!-- explorer -->
 <path d="M505 740h7l2 2h13v13h-22z" fill="#f8d878"/><path d="M505 744h22v11h-22z" fill="#ffe48a"/><path d="M510 750h12v6h-3v-3h-6v3h-3z" fill="#2a9ae8"/>
 <!-- store -->
 <path d="M554 742h20v15h-20z" fill="#fff"/><path d="M559 742v-3a5 5 0 0 1 10 0v3" fill="none" stroke="#fff" stroke-width="1.5"/><path d="M558 746h5v4h-5zM565 746h5v4h-5zM558 751h5v4h-5zM565 751h5v4h-5z" fill="#121218"/>
 <!-- laptop settings -->
 <path d="M603 755l6-9h12l-2 9z" fill="#888"/><circle cx="619" cy="744" r="5" fill="#ccc" stroke="#888"/>
 <!-- chrome -->
 <circle cx="663" cy="748" r="11" fill="#db4437"/><path d="M663 748L653.5 742.5A11 11 0 0 0 657.5 757.5z" fill="#0f9d58"/><path d="M663 748L657.5 757.5A11 11 0 0 0 674 748z" fill="#f4b400"/><path d="M663 748L674 748A11 11 0 0 0 672.5 742.5z" fill="#db4437"/><circle cx="663" cy="748" r="5" fill="#fff"/><circle cx="663" cy="748" r="3.8" fill="#4285f4"/>
 <!-- IE -->
 <g id="ie"><path d="M721 753c-2 2-5 4-9 4-5.5 0-9.5-4-9.5-9s4-9 9.5-9 9 4 9 9v1.5h-13c.3 2.5 2.3 4 4.5 4 2 0 3.5-1 4.5-2z M708 746h8c-.3-2-2-3.5-4-3.5s-3.7 1.5-4 3.5z" fill="#3cb4ec" fill-rule="evenodd"/><path d="M702 756c-3-4 6-14 18-18 5-1.5 6 1 3 4" fill="none" stroke="#f8c020" stroke-width="1.8"/></g>
 <use href="#ie" x="98"/>
 <!-- skype -->
 <circle cx="761" cy="747" r="10" fill="#1aa0e8"/><text x="755.5" y="753" font-family="Liberation Sans" font-size="15" font-weight="bold" fill="#fff">S</text>
 <circle cx="768" cy="755" r="5.5" fill="#f8a800"/><text x="765.5" y="758.5" font-family="Liberation Sans" font-size="9" font-weight="bold" fill="#000">2</text>
 <rect x="741" y="766" width="40" height="2" fill="#b4a8ec"/>
 <rect x="790" y="766" width="40" height="2" fill="#b4a8ec"/>
 <!-- clip gray -->
 <rect x="848" y="737" width="22" height="21" fill="#e4e4e4"/><path d="M857.5 741.5C852.5 743.5 851 747.5 853 750.5C855.5 753.5 863 753.5 865.5 750C867.5 747.5 865.5 744.5 861.5 744.5C858 744.5 855.5 746 856.5 748C857.5 750 861 750 862 748" fill="none" stroke="#7a7a7a" stroke-width="2.2" stroke-linecap="round"/>
 <rect x="839" y="766" width="41" height="2" fill="#b4a8ec"/>
 <!-- clip active -->
 <rect x="897" y="737" width="22" height="21" fill="#ececec"/><path d="M903 746C902 742 906 740 910 740C915 740 917 743 915.5 746C914 749 909 750 907 748C905.5 746.5 907 744.5 909 745.5M909.5 750L908 754" fill="none" stroke="#222" stroke-width="2.2" stroke-linecap="round"/><circle cx="908" cy="755" r="1.5" fill="#222"/>
 <rect x="884" y="766" width="48" height="2" fill="#b4a8ec"/>
 <!-- tray -->
 <path d="M1068 751l5.5-5 5.5 5" fill="none" stroke="#fff" stroke-width="1.4"/>
 <rect x="1090" y="743" width="14" height="10" fill="none" stroke="#fff" stroke-width="1.4"/><path d="M1090 748h14M1097 748v5" stroke="#fff" stroke-width="1.3"/>
 <path d="M1113 745h2v-3M1115 745h-2" stroke="#fff"/><rect x="1116" y="743" width="12" height="8" fill="none" stroke="#fff" stroke-width="1.3"/><rect x="1118" y="745" width="6" height="4" fill="#fff"/>
 <path d="M1137 745h3l4-4v14l-4-4h-3z" fill="none" stroke="#fff" stroke-width="1.2"/><path d="M1147 745l4 4M1151 745l-4 4" stroke="#fff" stroke-width="1.2"/>
 <path d="M1166 755c2-4 4-8 9-12l2 2c-4 5-7 7-11 10z M1166 755c-1-3 3-3 2 0" fill="none" stroke="#fff" stroke-width="1.3"/>
 <rect x="1193" y="742" width="23" height="11" fill="none" stroke="#fff" stroke-width="1.3"/><path d="M1196 745h17M1196 748h17M1198 751h13" stroke="#fff" stroke-width="1" stroke-dasharray="1.5 1"/>
 <path d="M1226 755l6-15 6 15M1228.5 750h7" fill="none" stroke="#fff" stroke-width="1.4"/>
 <path d="M1326 741h15v11h-6l-3 3-1-3h-5z" fill="none" stroke="#fff" stroke-width="1.3"/>
</svg>
<div class="t" style="left:1264px;top:733px;font-size:12px;color:#fff;--w:27px">23:40</div>
<div class="t" style="left:1249px;top:752px;font-size:12px;color:#fff;--w:58px">2017/03/29</div>
<div class="t" style="left:86px;top:741px;font-size:14px;color:#a8a8a8;--w:118px">何でも聞いてください</div>
<div class="a" style="left:1361px;top:728px;width:5px;height:40px;background:#121218;border-left:1px solid #2a2a30"></div>


<script>
function fitT(){document.querySelectorAll('.t').forEach(function(e){
  var w=getComputedStyle(e).getPropertyValue('--w');
  if(w){w=parseFloat(w);e.style.transform='none';var r=e.getBoundingClientRect().width;if(r>0){e.style.transform='scaleX('+(w/r)+')';}}
});}
fitT();
window.addEventListener('load',fitT);
if(document.fonts&&document.fonts.ready){document.fonts.ready.then(fitT);}
</script>
</body></html>
